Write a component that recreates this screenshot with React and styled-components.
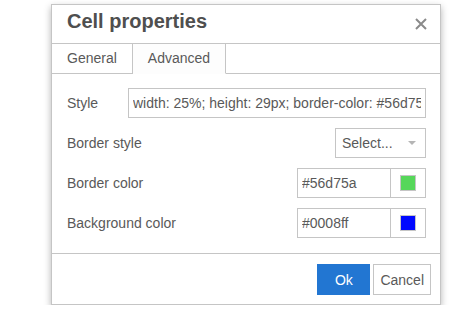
import React from "react";
import styled, { createGlobalStyle } from "styled-components";

const GlobalStyle = createGlobalStyle`
  body {
    margin: 0;
    background: #fff;
    font-family: "Liberation Sans", Arial, sans-serif;
  }
`;

const Page = styled.div`
  padding: 4px 0 0 51px;
`;

const Dialog = styled.div`
  width: 390px;
  box-sizing: border-box;
  border: 1px solid #c5c5c5;
  background: #fff;
  box-shadow: 0 3px 7px rgba(0, 0, 0, 0.3);
  color: #595959;
  font-size: 14px;
`;

const Header = styled.div`
  height: 39px;
  box-sizing: border-box;
  border-bottom: 1px solid #c5c5c5;
  padding: 6px 13px 0 15px;
  display: flex;
  justify-content: space-between;
`;

const Title = styled.div`
  font-size: 20px;
  line-height: 20px;
  font-weight: bold;
  color: #4f4f4f;
`;

const Close = styled.button`
  border: 0;
  background: none;
  padding: 0;
  margin-top: 7px;
  width: 12px;
  height: 12px;
  display: flex;
`;

const Tabs = styled.div`
  display: flex;
  border-bottom: 1px solid #c5c5c5;
  height: 30px;
  box-sizing: border-box;
`;

const Tab = styled.div`
  height: 30px;
  box-sizing: border-box;
  line-height: 29px;
  padding: 0 15px;
  border-right: 1px solid #c5c5c5;
  border-bottom: 1px solid ${(p) => (p.$active ? "#fdfdfd" : "#c5c5c5")};
  background: ${(p) => (p.$active ? "#fdfdfd" : "#fff")};
  color: #595959;
`;

const Body = styled.div`
  padding: 14px 14px 15px 15px;
  border-bottom: 1px solid #c5c5c5;
  display: flex;
  flex-direction: column;
  gap: 10px;
`;

const Row = styled.div`
  display: flex;
  align-items: center;
  justify-content: space-between;
  height: 30px;
`;

const Label = styled.label`
  line-height: 30px;
  flex: none;
  width: ${(p) => p.$width || "auto"};
`;

const TextBox = styled.input`
  height: 30px;
  box-sizing: border-box;
  border: 1px solid #c5c5c5;
  padding: 0 4px;
  font-family: "Liberation Sans", Arial, sans-serif;
  font-size: 14px;
  color: #595959;
  background: #fff;
  outline: none;
  width: ${(p) => p.$width || "auto"};
  flex: ${(p) => (p.$grow ? 1 : "none")};
  min-width: 0;
`;

const Select = styled.div`
  width: 91px;
  height: 30px;
  box-sizing: border-box;
  border: 1px solid #c5c5c5;
  padding: 0 9px 0 6px;
  display: flex;
  align-items: center;
  justify-content: space-between;
  line-height: 28px;
`;

const Caret = styled.span`
  width: 0;
  height: 0;
  border-left: 4px solid transparent;
  border-right: 4px solid transparent;
  border-top: 4px solid #b5b5b5;
`;

const ColorGroup = styled.div`
  display: flex;
`;

const SwatchButton = styled.div`
  width: 35px;
  height: 30px;
  box-sizing: border-box;
  border: 1px solid #c5c5c5;
  border-left: 0;
  display: flex;
  align-items: center;
  justify-content: center;
`;

const Swatch = styled.span`
  width: 16px;
  height: 16px;
  box-sizing: border-box;
  border: 1px solid #c5c5c5;
  background: ${(p) => p.$color};
`;

const Footer = styled.div`
  display: flex;
  justify-content: flex-end;
  gap: 3px;
  padding: 10px 9px 9px 10px;
`;

const Button = styled.button`
  height: 31px;
  box-sizing: border-box;
  min-width: ${(p) => (p.$primary ? "53px" : "0")};
  padding: 0 6px;
  font-family: "Liberation Sans", Arial, sans-serif;
  font-size: 14px;
  border: 1px solid ${(p) => (p.$primary ? "#2276d2" : "#c5c5c5")};
  background: ${(p) => (p.$primary ? "#2276d2" : "#fff")};
  color: ${(p) => (p.$primary ? "#fff" : "#595959")};
`;

export default function App() {
  return (
    <Page>
      <GlobalStyle />
      <Dialog>
        <Header>
          <Title>Cell properties</Title>
          <Close aria-label="Close">
            <svg width="12" height="12" viewBox="0 0 12 12">
              <path d="M1 1L11 11M11 1L1 11" stroke="#8a8a8a" strokeWidth="2" />
            </svg>
          </Close>
        </Header>
        <Tabs>
          <Tab>General</Tab>
          <Tab $active>Advanced</Tab>
        </Tabs>
        <Body>
          <Row>
            <Label $width="61px">Style</Label>
            <TextBox
              $grow
              readOnly
              defaultValue="width: 25%; height: 29px; border-color: #56d75a; background-color: #0008ff;"
            />
          </Row>
          <Row>
            <Label>Border style</Label>
            <Select>
              <span>Select...</span>
              <Caret />
            </Select>
          </Row>
          <Row>
            <Label>Border color</Label>
            <ColorGroup>
              <TextBox $width="94px" readOnly defaultValue="#56d75a" />
              <SwatchButton>
                <Swatch $color="#56d75a" />
              </SwatchButton>
            </ColorGroup>
          </Row>
          <Row>
            <Label>Background color</Label>
            <ColorGroup>
              <TextBox $width="94px" readOnly defaultValue="#0008ff" />
              <SwatchButton>
                <Swatch $color="#0008ff" />
              </SwatchButton>
            </ColorGroup>
          </Row>
        </Body>
        <Footer>
          <Button $primary>Ok</Button>
          <Button>Cancel</Button>
        </Footer>
      </Dialog>
    </Page>
  );
}
